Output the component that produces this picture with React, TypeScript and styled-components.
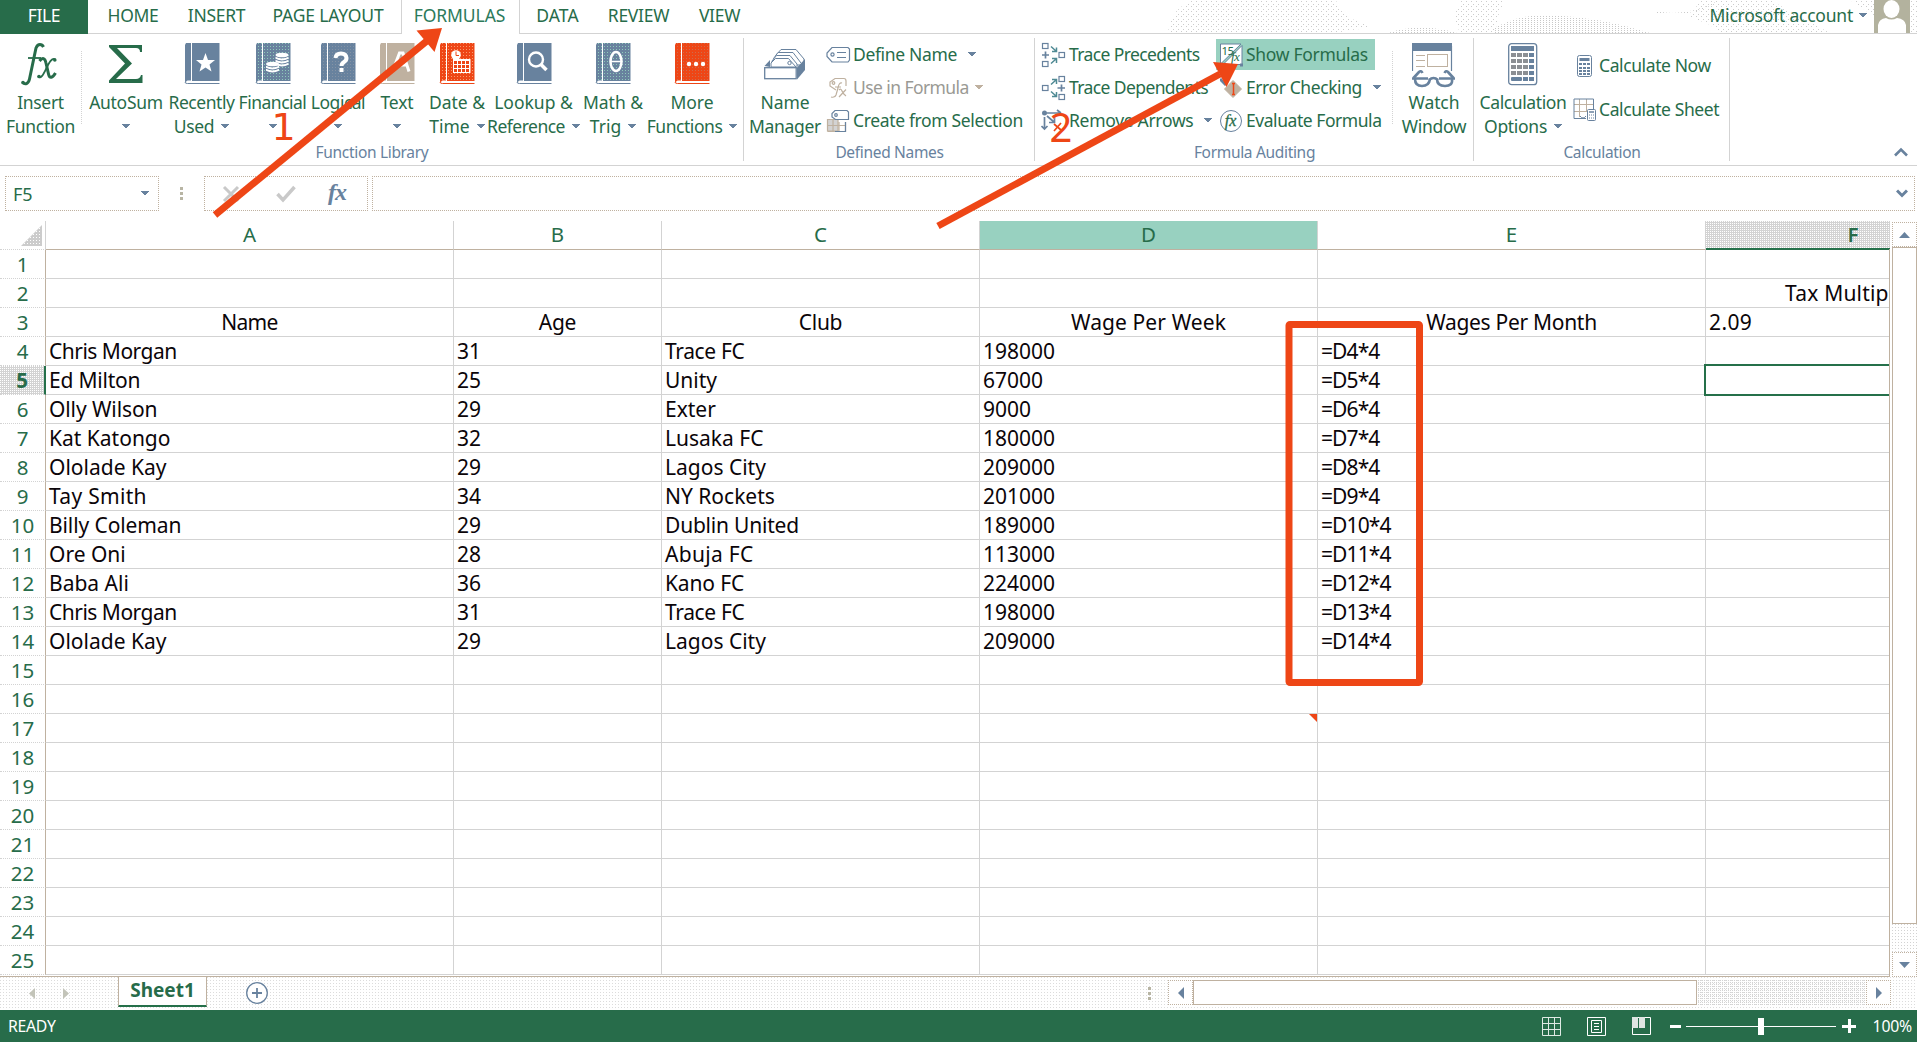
import React from 'react';
import styled, { createGlobalStyle, css } from 'styled-components';

const GREEN = '#276c4a';
const SLATE = '#68829e';
const TAN = '#bfb1a0';
const LINE = '#d3d3d3';
const RED = '#ee4616';
const MINT = '#98d1c0';

const Global = createGlobalStyle`
  * { box-sizing: border-box; }
  html, body { margin: 0; background: #fff; overflow: hidden; }
  body { font-family: "Noto Sans", "Open Sans", sans-serif; color: ${GREEN}; }
`;

const dots = (color: string, size = 3) => css`
  background-image: conic-gradient(at 1px 1px, transparent 75%, ${color} 0);
  background-size: ${size}px ${size}px;
`;

const Window = styled.div`
  position: relative;
  width: 1917px;
  height: 1042px;
  display: flex;
  flex-direction: column;
  overflow: hidden;
  white-space: nowrap;
  background: #fff;
`;

const Label = styled.span<{ $ls?: number }>`
  letter-spacing: ${(p) => p.$ls ?? 0}px;
`;

/* ---------- tabs ---------- */
const TabBar = styled.nav`
  position: relative;
  display: flex;
  flex: none;
  height: 34px;
  font-size: 17.5px;
  line-height: 31px;
`;
const Tab = styled.div<{ $w: number; $kind?: 'file' | 'active' }>`
  position: relative;
  width: ${(p) => p.$w}px;
  text-align: center;
  border-bottom: 1px solid ${LINE};
  ${(p) => p.$kind === 'file' && css`background: ${GREEN}; color: #fff; border-color: ${GREEN};`}
  ${(p) => p.$kind === 'active' && css`
    border: 1px solid ${LINE};
    border-width: 0 1px;
    color: #2c7a5b;
    padding-right: 2px;
  `}
`;
const TabFill = styled.div`
  flex: 1;
  display: flex;
  justify-content: flex-end;
  border-bottom: 1px solid ${LINE};
`;
const Clouds = styled.svg`
  position: absolute;
  left: 1150px;
  top: 0;
`;
const Account = styled.div`
  position: relative;
  display: flex;
  align-items: center;
  gap: 6px;
  height: 33px;
  padding: 0 7px 3px 0;
`;
const Avatar = styled.div`
  margin: 0 0 -3px 1px;
  width: 36px;
  height: 33px;
`;

/* ---------- ribbon ---------- */
const Ribbon = styled.section`
  display: flex;
  flex: none;
  height: 132px;
  border-bottom: 1px solid ${LINE};
  font-size: 17.5px;
`;
const Group = styled.div<{ $w: number }>`
  position: relative;
  display: flex;
  flex-direction: column;
  width: ${(p) => p.$w}px;
  &::after {
    content: '';
    position: absolute;
    right: 0;
    top: 4px;
    width: 1px;
    height: 123px;
    background: ${LINE};
  }
`;
const GroupBody = styled.div`
  display: flex;
  height: 106px;
`;
const GroupName = styled.div`
  text-align: center;
  font-size: 15.5px;
  letter-spacing: -0.32px;
  line-height: 26px;
  color: ${SLATE};
`;
const Big = styled.div<{ $w: number }>`
  width: ${(p) => p.$w}px;
  flex: none;
  display: flex;
  flex-direction: column;
  align-items: center;
`;
const BigIcon = styled.div`
  height: 56px;
  padding-top: 9px;
  svg { display: block; }
`;
const BigLine = styled.div`
  display: flex;
  justify-content: center;
  align-items: center;
  gap: 7px;
  height: 24px;
  line-height: 24px;
`;
const Dashed = styled.div`
  flex: none;
  width: 2px;
  height: 73px;
  margin-top: 17px;
  ${dots(LINE, 2)}
`;
const Column = styled.div<{ $w: number; $gap?: number; $top?: number; $pad?: number }>`
  width: ${(p) => p.$w}px;
  flex: none;
  display: flex;
  flex-direction: column;
  gap: ${(p) => p.$gap ?? 2}px;
  padding: ${(p) => p.$top ?? 5}px 0 0 ${(p) => p.$pad ?? 0}px;
`;
const Small = styled.div<{ $on?: boolean; $off?: boolean; $icon?: number; $inset?: number }>`
  display: grid;
  grid-template-columns: ${(p) => p.$icon ?? 27}px max-content max-content;
  align-items: center;
  height: 31px;
  line-height: 31px;
  svg { display: block; }
  > :first-child { margin-left: ${(p) => p.$inset ?? 0}px; }
  > :nth-child(3) { margin-left: 11px; }
  ${(p) => p.$off && css`color: #9a9a94; > :nth-child(3) { margin-left: 6px; }`}
  ${(p) => p.$on && css`background: ${MINT}; width: 159px;`}
`;
const Collapse = styled.div`
  flex: 1;
  display: flex;
  justify-content: flex-end;
  align-items: flex-end;
  padding: 0 9px 8px 0;
  svg { display: block; }
`;

/* ---------- formula bar ---------- */
const FormulaBar = styled.div`
  display: flex;
  flex: none;
  height: 55px;
  padding: 10px 0 0 5px;
`;
const Box = styled.div<{ $w: number; $ml?: number }>`
  width: ${(p) => p.$w}px;
  margin-left: ${(p) => p.$ml ?? 0}px;
  height: 35px;
  flex: none;
  display: flex;
  align-items: center;
  justify-content: space-between;
  border: 1px dotted ${TAN};
  font-size: 18px;
`;
const NameText = styled.span`
  padding-left: 7px;
`;
const CaretSlot = styled.span<{ $end?: number }>`
  display: flex;
  align-items: center;
  padding-right: ${(p) => p.$end ?? 6}px;
`;
const FxTools = styled.div`
  display: flex;
  align-items: center;
  gap: 36px;
  padding-left: 17px;
  svg { display: block; overflow: visible; }
  > :last-child { margin-left: -6px; }
`;
const Grip = styled.div`
  display: flex;
  flex-direction: column;
  gap: 2px;
  &::before, &::after, > i { content: ''; display: block; width: 3px; height: 3px; background: #b8b5a4; }
`;
const GripSlot = styled.div`
  width: 45px;
  height: 35px;
  padding-top: 11px;
  padding-left: 21px;
`;

/* ---------- sheet ---------- */
const SheetArea = styled.main`
  display: flex;
  flex: none;
  align-items: flex-start;
  height: 756px;
`;
const Sheet = styled.div`
  position: relative;
  width: 1890px;
  height: 756px;
  border-bottom: 1px solid ${TAN};
  overflow: hidden;
  &::after {
    content: '';
    position: absolute;
    right: 0;
    top: 28px;
    bottom: 0;
    width: 1px;
    background: ${TAN};
  }
`;
const columns = '46px 408px 208px 318px 338px 388px 184px';
const HeadRow = styled.div`
  display: grid;
  grid-template-columns: ${columns};
  height: 29px;
  font-size: 20.5px;
  line-height: 27px;
`;
const Head = styled.div<{ $sel?: 'mint' | 'grey' }>`
  text-align: center;
  border-right: 1px solid ${LINE};
  border-bottom: 1px solid ${TAN};
  ${(p) => p.$sel === 'mint' && css`background: ${MINT};`}
  ${(p) => p.$sel === 'grey' && css`
    background-color: ${LINE};
    ${dots('#fff', 2)}
    border-right: 0;
    border-bottom: 2px solid #25704a;
    padding-left: 110px;
    font-weight: 600;
  `}
`;
const Corner = styled.div`
  display: flex;
  justify-content: flex-end;
  align-items: flex-end;
  padding: 0 3px 3px 0;
  border-right: 1px solid ${LINE};
  border-bottom: 1px dotted ${LINE};
  svg { display: block; }
`;
const Row = styled.div`
  display: grid;
  grid-template-columns: ${columns};
  height: 29px;
`;
const RowHead = styled.div<{ $sel?: boolean }>`
  text-align: center;
  font-size: 20.5px;
  line-height: 28px;
  border-right: 1px solid ${TAN};
  border-bottom: 1px dotted ${LINE};
  ${(p) => p.$sel && css`
    background-color: ${LINE};
    ${dots('#fff', 2)}
    border-right: 2px solid #25704a;
    font-weight: 700;
  `}
`;
const Cell = styled.div<{ $center?: boolean; $indent?: number }>`
  position: relative;
  padding-left: ${(p) => (p.$center ? 0 : p.$indent ?? 3)}px;
  text-align: ${(p) => (p.$center ? 'center' : 'left')};
  border-right: 1px solid ${LINE};
  border-bottom: 1px solid ${LINE};
  color: #0b0509;
  font-size: 21px;
  line-height: 28px;
  overflow: hidden;
`;
const Note = styled.i`
  position: absolute;
  right: 0;
  top: 0;
  border-left: 8px solid transparent;
  border-top: 8px solid ${RED};
`;
const ActiveCell = styled.div`
  position: absolute;
  left: 1704px;
  top: 143px;
  width: 190px;
  height: 32px;
  border: 2px solid #25704a;
`;
const VScroll = styled.div`
  width: 25px;
  margin: 1px 0 0 2px;
  height: 755px;
  flex: none;
  display: flex;
  flex-direction: column;
  ${dots(LINE, 3)}
`;
const ScrollButton = styled.div`
  width: 25px;
  height: 25px;
  flex: none;
  display: flex;
  align-items: center;
  justify-content: center;
  background: #fff;
  border: 1px dotted ${TAN};
`;
const VThumb = styled.div`
  height: 677px;
  margin-bottom: 28px;
  background: #fff;
  border: 1px solid ${TAN};
`;

/* ---------- bottom ---------- */
const SheetBar = styled.div`
  display: flex;
  flex: none;
  height: 33px;
  ${dots('#dcdcdc', 3)}
`;
const SheetNav = styled.div`
  width: 118px;
  display: flex;
  align-items: center;
  gap: 28px;
  padding-left: 29px;
`;
const SheetTab = styled.div`
  width: 89px;
  height: 30px;
  background: #fff;
  border: 1px solid ${TAN};
  border-top: 0;
  border-bottom: 2px solid #25704a;
  text-align: center;
  font-size: 19px;
  line-height: 27px;
  font-weight: 700;
`;
const AddSheet = styled.div`
  width: 945px;
  padding: 5px 0 0 39px;
  display: flex;
  justify-content: space-between;
  svg { display: block; }
`;
const AddGrip = styled.div`
  padding-top: 5px;
  padding-right: 1px;
`;
const HScroll = styled.div`
  display: flex;
  width: 723px;
  height: 25px;
  margin: 3px 0 0 16px;
  ${dots(LINE, 2)}
`;
const HThumb = styled.div`
  width: 504px;
  margin-right: 169px;
  background: #fff;
  border: 1px solid ${TAN};
`;
const Status = styled.footer`
  flex: none;
  height: 32px;
  display: flex;
  align-items: center;
  background: ${GREEN};
  color: #fff;
  font-size: 15.8px;
  padding: 0 5px 0 8px;
  svg { display: block; }
`;
const StatusText = styled.span`
  flex: 1;
`;
const ViewIcons = styled.div`
  display: flex;
  gap: 26px;
  margin-right: 19px;
`;
const Zoom = styled.div`
  margin-right: 17px;
`;

const Overlay = styled.svg`
  position: absolute;
  left: 0;
  top: 0;
  pointer-events: none;
`;

/* ---------- icons ---------- */
const Caret = ({ c = SLATE }: { c?: string }) => (
  <svg width="8" height="5" viewBox="0 0 8 5" shapeRendering="crispEdges"><path d="M0 0h8L4 4.6z" fill={c} /></svg>
);

const Book = ({ c, speck, children }: { c: string; speck?: string; children: React.ReactNode }) => {
  const id = 'b' + c.slice(1) + (speck ?? '').slice(1);
  return (
    <svg width="36" height="42" viewBox="0 0 36 42">
      <defs>
        <pattern id={id} width="3" height="3" patternUnits="userSpaceOnUse">
          <rect width="3" height="3" fill={c} />
          {speck && <rect width="1" height="1" fill={speck} />}
        </pattern>
      </defs>
      <path d="M2 0H7V37.5H3.5L1 39.5V2z" fill={`url(#${id})`} />
      <path d="M8 0H35.500V38H8z" fill={`url(#${id})`} />
      <path d="M1 39Q1 40.500 3.500 40.500H35.500" fill="none" stroke={c} strokeWidth="1" />
      {children}
    </svg>
  );
};

const coin = (x: number, y: number, n: number) => (
  <g fill="#fff">
    <ellipse cx={x} cy={y} rx="6.500" ry="2.300" />
    {Array.from({ length: n }, (_, i) => (
      <path key={i} d={`M${x - 6.5} ${y + 1.8 + i * 3}q6.500 3.600 13 0v2q-6.500 3.400 -13 0z`} />
    ))}
  </g>
);

const SmallFx = () => (
  <svg width="24" height="26" viewBox="0 0 24 26">
    <text x="2" y="19" fontFamily="Liberation Serif, serif" fontStyle="italic" fontWeight="600" fontSize="24" fill={SLATE} letterSpacing="-1">fx</text>
  </svg>
);
const BigFx = () => (
  <svg width="40" height="43" viewBox="0 0 40 43" fill="none" stroke={GREEN}>
    <path d="M22.500 4C21 1 17 0 15 5L8.500 36C7.500 41 4 42 1.500 39.500" strokeWidth="3" />
    <path d="M7 15H20" strokeWidth="1.800" />
    <path d="M18.500 18C21.500 14 24 15 25 20L27.500 31C28.500 36 31.500 35 34.500 30" strokeWidth="3" />
    <path d="M34.500 16.500C31 14 28 20 25.500 25S20 37 17 33.500" strokeWidth="1.800" />
    <circle cx="33.800" cy="17" r="1.800" fill={GREEN} stroke="none" />
    <circle cx="18" cy="33.500" r="1.800" fill={GREEN} stroke="none" />
    <circle cx="2" cy="39.500" r="1.800" fill={GREEN} stroke="none" />
  </svg>
);
const Sigma = () => (
  <svg width="34" height="42" viewBox="0 0 34 42"><path d="M0 2H33V9H31Q31 5 27 5H8L23 20.500L7 36H27Q31 36 32 32H33.500V40H0V37.500L16 20.500L0 4z" fill={GREEN} /></svg>
);
const NameManager = () => (
  <svg width="42" height="40" viewBox="0 0 42 40">
    <g fill="#fff" stroke={SLATE} strokeWidth="1">
      <path d="M12 17V12L17 6.500H32L40 16V22H30z" />
      <path d="M9.500 22V15.500L14 9.500H29L37 20" />
      <path d="M8 22V18L12.500 12.500H26L33 21V25H8z" />
      <path d="M7 24V20L11.500 15.500H24.500L32 24z" />
    </g>
    <path d="M.5 23L6 17V24z" fill={SLATE} />
    <path d="M33 24.500L41 16V27L33 36.500z" fill={SLATE} />
    <rect x=".7" y="24.700" width="31.500" height="11" fill="#fff" stroke={SLATE} strokeWidth="1.300" />
    <circle cx="25.500" cy="20" r="1.700" fill="#fff" stroke={SLATE} />
  </svg>
);
const Tag = () => (
  <svg width="25" height="18" viewBox="0 0 25 18" fill="none" stroke={SLATE} strokeWidth="1.200">
    <path d="M6 1.500H22L23.500 3V14L22 16H6L1 10.500V7z" /><circle cx="6.500" cy="8.500" r="1.600" /><path d="M11 6.500H20M11 11.500H20" />
  </svg>
);
const UseIn = () => (
  <svg width="25" height="22" viewBox="0 0 25 22" fill="none" stroke={TAN} strokeWidth="1.200">
    <path d="M10 13L4 9V5L9 1.500H18Q20 1.500 20 4V9" /><circle cx="7.500" cy="6" r="1.300" />
    <path d="M16 6Q13 5 12 11L10 18Q9 21 5 20M9 10H15M13 13Q15 11 16 14T20 19M20 12.500L13 20" />
  </svg>
);
const CreateSel = () => (
  <svg width="24" height="24" viewBox="0 0 24 24" strokeWidth="1.200">
    <path d="M1.500 10.500H12V22H1.500z" fill={LINE} stroke={TAN} />
    <path d="M1.500 16.500H19M7 10V22M13 13V22M1.500 22.500H19.500V13" fill="none" stroke={TAN} />
    <path d="M9 22.500H19.500V13" fill="none" stroke={SLATE} />
    <path d="M9 1.500H21L22.500 3V10.500H9.500L6 8V4.500z" fill="#fff" stroke={SLATE} /><circle cx="10" cy="6" r="1.300" fill="none" stroke={SLATE} />
  </svg>
);
const Precedents = () => (
  <svg width="25" height="26" viewBox="0 0 25 26" fill="none" stroke={SLATE} strokeWidth="1.200">
    <rect x="1.500" y="1.500" width="5.500" height="5" /><rect x="1.500" y="19.500" width="5.500" height="5" /><rect x="18" y="10.500" width="5.500" height="5" />
    <path d="M1 13H8M4.500 9.500V16.500" strokeWidth="1.700" /><path d="M10 4.500L15 9M15.500 5.500V9.500H11M10 21.500L15 17M11 16.500H15.500V21" stroke="#4f8a94" strokeWidth="1.500" />
  </svg>
);
const Dependents = () => (
  <svg width="25" height="26" viewBox="0 0 25 26" fill="none" stroke={SLATE} strokeWidth="1.200">
    <rect x="18" y="1.500" width="5.500" height="5" /><rect x="18" y="19.500" width="5.500" height="5" /><rect x="1.500" y="10.500" width="5.500" height="5" />
    <path d="M16.500 13H24M20.500 9.500V16.500" strokeWidth="1.700" /><path d="M10 9.500L15 5M11 4.500H15.500V9M10 16.500L15 21M15.500 17V21.500H11" stroke="#4f8a94" strokeWidth="1.500" />
  </svg>
);
const RemoveArrows = () => (
  <svg width="25" height="24" viewBox="0 0 25 24" fill="none" stroke={SLATE} strokeWidth="1.700">
    <circle cx="3.500" cy="4" r="2.500" fill={SLATE} stroke="none" /><path d="M6 4H19M16 1L20 4M3.500 8V20M.5 17L3.500 20L6.500 17M6 7L13 13M13.500 8V13.500H8" />
    <path d="M13 15L20 21M20 14L13 22" stroke={RED} />
  </svg>
);
const ShowIcon = () => (
  <svg width="23" height="24" viewBox="0 0 23 24">
    <path d="M.5 1H21L.5 21z" fill="#fff" stroke={SLATE} /><path d="M22 2.500V21.500H3z" fill="#fff" stroke={SLATE} />
    <text x="1.500" y="12" fontSize="11.500" fill={GREEN} fontFamily="Noto Sans, sans-serif" letterSpacing="-.5">15</text>
    <text x="11" y="18" fontSize="13" fill={GREEN} fontFamily="Liberation Serif, serif" fontStyle="italic" letterSpacing="-.5">fx</text>
    <rect x="20" y="20.500" width="3" height="3" fill={SLATE} />
  </svg>
);
const ErrorIcon = () => (
  <svg width="23" height="24" viewBox="0 0 23 24">
    <path d="M0 3L6 9" stroke={SLATE} strokeWidth="3" /><path d="M13 4.500L21.500 13L13 21.500L4.500 13z" fill={TAN} stroke={TAN} strokeLinejoin="round" /><path d="M13.500 7V19M12 7.500H15M12 18.500H15" stroke={RED} strokeWidth="1.500" />
  </svg>
);
const Evaluate = () => (
  <svg width="23" height="24" viewBox="0 0 23 24">
    <circle cx="11" cy="12" r="10.500" fill="#fff" stroke={SLATE} /><text x="10.500" y="16.500" textAnchor="middle" fontSize="16" fontStyle="italic" fill={GREEN} stroke={GREEN} strokeWidth=".3" fontFamily="Liberation Serif, serif">fx</text>
  </svg>
);
const Watch = () => (
  <svg width="44" height="46" viewBox="0 0 44 46" fill="none">
    <path d="M.5 28V3M39.500 28V3" stroke={SLATE} strokeWidth="1.200" /><rect width="40" height="8" fill={SLATE} />
    <path d="M4 12.500H13M4 17.500H13M4 23.500H13" stroke={TAN} /><rect x="15.500" y="11.500" width="20" height="12" stroke={TAN} />
    <g stroke={SLATE} strokeWidth="2.600"><path d="M1.500 35L7 29Q9 27 10.500 30M41.500 35L36 29Q34 27 32.500 30" /><path d="M0 35.500H16M27 35.500H43M17 37Q21.500 33 26 37" /><path d="M3 36Q3 43 10 43T18 36M25 36Q25 43 33 43T40 36" /></g>
  </svg>
);
const CalcBig = () => (
  <svg width="30" height="43" viewBox="0 0 30 43">
    <rect x=".7" y=".7" width="28" height="41" rx="3" fill="#fff" stroke={SLATE} strokeWidth="1.300" /><rect x="3" y="3" width="23" height="5" fill={SLATE} />
    {[10, 16, 22, 28].map((y) => [3, 9, 15, 21].map((x) => <rect key={`${x}-${y}`} x={x} y={y} width="5" height="4" fill={x === 21 ? SLATE : '#8c8f93'} />))}
    <rect x="3" y="34" width="11" height="4" rx="1" fill={SLATE} /><rect x="15" y="34" width="5" height="4" fill={SLATE} /><rect x="21" y="34" width="5" height="4" fill={SLATE} />
  </svg>
);
const CalcSmall = () => (
  <svg width="20" height="24" viewBox="0 0 20 24">
    <rect x="4.500" y="1.500" width="14" height="21" rx="2" fill="#fff" stroke={SLATE} /><rect x="6.500" y="4" width="10" height="3" fill={SLATE} />
    {[9, 13, 16, 19].map((y) => [6, 10, 14].map((x) => <rect key={`${x}-${y}`} x={x} y={y} width="3" height="2" fill={SLATE} />))}
  </svg>
);
const CalcSheet = () => (
  <svg width="24" height="24" viewBox="0 0 24 24" fill="none">
    <path d="M6.500 1V19M13.500 1V14M1 6.500H21M1 13.500H14" stroke={TAN} /><path d="M13 20.500H1V1H20.500V11M7 18Q10 22 13 18" stroke={SLATE} />
    <rect x="14.500" y="11.500" width="8" height="11" rx="1" fill="#fff" stroke={SLATE} /><path d="M16 14H21" stroke={SLATE} strokeWidth="1.500" /><path d="M16 17H21M16 20H21" stroke={SLATE} strokeDasharray="1 1" />
  </svg>
);

const books = {
  recent: <Book c={SLATE}><path d="M21.500 10L24 17H31L25.500 21.500L27.500 28.500L21.500 24.500L15.500 28.500L17.500 21.500L12 17H19z" fill="#fff" /></Book>,
  financial: <Book c={SLATE} speck="#8fc9ba">{coin(27, 12, 3)}{coin(17.5, 21, 2)}</Book>,
  logical: <Book c={SLATE} speck="#8493a5"><path d="M15.500 15Q16 10.500 21 10.500T26.500 15Q26.500 17.500 24 19Q21.500 20.500 21.500 23" fill="none" stroke="#fff" strokeWidth="4" /><rect x="19.500" y="25" width="4" height="4" fill="#fff" /></Book>,
  text: <Book c={TAN}><path d="M13.500 28.500L20.500 10H24L30 28.500M16 22H27" fill="none" stroke="#fff" strokeWidth="3" /></Book>,
  date: (
    <Book c={RED} speck="#f79a6e">
      <circle cx="17" cy="12" r="4.800" fill="#fff" /><path d="M17 8.500V12.500H20" stroke={RED} fill="none" />
      <path d="M14 16H31.500V30H14z" fill="#fff" />
      {[18, 22, 26].map((y) => [15, 19, 23, 27].map((x) => <rect key={`${x}-${y}`} x={x} y={y} width="3" height="3" fill={RED} />))}
    </Book>
  ),
  lookup: <Book c={SLATE}><circle cx="20" cy="16.500" r="7" fill="none" stroke="#fff" strokeWidth="2.400" /><path d="M25 21.500L30.500 27" stroke="#fff" strokeWidth="3.500" /></Book>,
  math: <Book c={SLATE} speck="#8fc9ba"><ellipse cx="21" cy="18.500" rx="5.500" ry="9.500" fill="none" stroke="#fff" strokeWidth="2.500" /><path d="M16 18.500H26" stroke="#fff" strokeWidth="1.500" /></Book>,
  more: <Book c={RED} speck="#cf6c4c"><g fill="#fff"><circle cx="15" cy="21" r="2.200" /><circle cx="22" cy="21" r="2.200" /><circle cx="29" cy="21" r="2.200" /></g></Book>,
};

type BigProps = { w: number; icon: React.ReactNode; a: string; b?: string; caret?: boolean; lsA?: number; lsB?: number };
const BigButton = ({ w, icon, a, b, caret, lsA = -0.3, lsB = -0.3 }: BigProps) => (
  <Big $w={w}>
    <BigIcon>{icon}</BigIcon>
    <BigLine><Label $ls={lsA}>{a}</Label></BigLine>
    <BigLine>{b && <Label $ls={lsB}>{b}</Label>}{caret && <Caret />}</BigLine>
  </Big>
);

/* ---------- data ---------- */
const players: [string, string, string, string][] = [
  ['Chris Morgan', '31', 'Trace FC', '198000'],
  ['Ed Milton', '25', 'Unity', '67000'],
  ['Olly Wilson', '29', 'Exter', '9000'],
  ['Kat Katongo', '32', 'Lusaka FC', '180000'],
  ['Ololade Kay', '29', 'Lagos City', '209000'],
  ['Tay Smith', '34', 'NY Rockets', '201000'],
  ['Billy Coleman', '29', 'Dublin United', '189000'],
  ['Ore Oni', '28', 'Abuja FC', '113000'],
  ['Baba Ali', '36', 'Kano FC', '224000'],
  ['Chris Morgan', '31', 'Trace FC', '198000'],
  ['Ololade Kay', '29', 'Lagos City', '209000'],
];

const tracking: Record<string, number> = {
  'Chris Morgan': -0.5,
  'Ed Milton': -0.2,
  'Olly Wilson': -0.1,
  'Tay Smith': 0.3,
  'Billy Coleman': -0.1,
  'Trace FC': -0.35,
  'Dublin United': -0.2,
  'Abuja FC': 0.3,
  'Kano FC': -0.15,
  Name: -0.7,
  Age: -0.3,
  Club: -0.3,
  'Wage Per Week': 0.1,
  'Wages Per Month': -0.3,
  'Tax Multip': 0.2,
  '2.09': 0.4,
};
const trackingOf = (v: string) => (v.startsWith('=') ? -0.9 : tracking[v] ?? 0);

const SheetRow = ({ n }: { n: number }) => {
  const p = players[n - 4];
  const head = n === 3 ? ['Name', 'Age', 'Club', 'Wage Per Week', 'Wages Per Month'] : null;
  const values = head ?? (p ? [...p, `=D${n}*4`] : ['', '', '', '', '']);
  const last = n === 2 ? 'Tax Multip' : n === 3 ? '2.09' : '';
  return (
    <Row>
      <RowHead $sel={n === 5}>{n}</RowHead>
      {values.map((v, i) => (
        <Cell key={i} $center={!!head}>
          <Label $ls={trackingOf(v)}>{v}</Label>
          {n === 17 && i === 3 && <Note />}
        </Cell>
      ))}
      <Cell $indent={n === 2 ? 79 : 3}><Label $ls={trackingOf(last)}>{last}</Label></Cell>
    </Row>
  );
};

export default function App() {
  return (
    <Window>
      <Global />
      <TabBar>
        <Clouds width="767" height="33">
          <defs>
            <pattern id="light" width="5" height="5" patternUnits="userSpaceOnUse"><rect x="1" y="1" width="1" height="1" fill="#ccc" /><rect x="3" y="4" width="1" height="1" fill="#ccc" /></pattern>
            <pattern id="dense" width="3" height="2" patternUnits="userSpaceOnUse"><rect width="1" height="1" fill="#c8c8c8" /></pattern>
          </defs>
          <path d="M18 33Q20 8 44 0H186Q190 18 217 24V28L180 33z" fill="url(#light)" />
          <path d="M55 33Q56 18 72 14L120 20L142 12L148 0H180Q186 20 200 24L190 33z" fill="url(#light)" />
          <path d="M238 33Q270 22 307 33z" fill="url(#dense)" />
          <path d="M312 0H355Q347 15 346 28L342 33H310L304 16z" fill="url(#light)" />
          <path d="M312 0H345Q330 12 336 33H310L304 16z" fill="url(#light)" />
          <path d="M344 28Q370 14 400 15Q450 17 500 33H344z" fill="url(#dense)" />
          <path d="M507 11Q535 18 570 0Q545 18 507 13z" fill="url(#dense)" />
          <path d="M550 0H620L680 33H570Q560 22 540 18z" fill="url(#light)" />
          <path d="M700 0H767V33H745L715 10z" fill="url(#light)" />
        </Clouds>
        <Tab $w={88} $kind="file"><Label $ls={-0.4}>FILE</Label></Tab>
        <Tab $w={90}><Label $ls={-0.3}>HOME</Label></Tab>
        <Tab $w={77}><Label $ls={-0.3}>INSERT</Label></Tab>
        <Tab $w={146}><Label $ls={-0.15}>PAGE LAYOUT</Label></Tab>
        <Tab $w={119} $kind="active"><Label $ls={-0.1}>FORMULAS</Label></Tab>
        <Tab $w={75}><Label $ls={0.1}>DATA</Label></Tab>
        <Tab $w={87}><Label $ls={-0.3}>REVIEW</Label></Tab>
        <Tab $w={75}><Label $ls={-0.3}>VIEW</Label></Tab>
        <TabFill>
          <Account>
            <Label $ls={-0.22}>Microsoft account</Label>
            <Caret />
            <Avatar>
              <svg width="36" height="33" viewBox="0 0 36 33">
                <rect width="36" height="33" fill="#b3b29e" />
                <ellipse cx="17.500" cy="9" rx="8" ry="9" fill="#fff" />
                <path d="M4 33V25Q5 19 12 18Q17.500 21 23 18Q31 19 32 25V33z" fill="#fff" />
              </svg>
            </Avatar>
          </Account>
        </TabFill>
      </TabBar>

      <Ribbon>
        <Group $w={744}>
          <GroupBody>
            <BigButton w={81} icon={<BigFx />} a="Insert" b="Function" />
            <Dashed />
            <BigButton w={86} icon={<Sigma />} a="AutoSum" caret />
            <BigButton w={65} icon={books.recent} a="Recently" b="Used" caret lsA={-0.45} lsB={-0.3} />
            <BigButton w={77} icon={books.financial} a="Financial" caret lsA={-0.5} />
            <BigButton w={54} icon={books.logical} a="Logical" caret lsA={-0.5} />
            <BigButton w={64} icon={books.text} a="Text" caret lsA={-0.1} />
            <BigButton w={56} icon={books.date} a="Date &amp;" b="Time" caret lsA={0} lsB={0} />
            <BigButton w={97} icon={books.lookup} a="Lookup &amp;" b="Reference" caret lsA={0} lsB={-0.5} />
            <BigButton w={62} icon={books.math} a="Math &amp;" b="Trig" caret lsA={0} lsB={0} />
            <BigButton w={96} icon={books.more} a="More" b="Functions" caret lsA={-0.1} lsB={-0.45} />
          </GroupBody>
          <GroupName>Function Library</GroupName>
        </Group>

        <Group $w={291}>
          <GroupBody>
            <BigButton w={82} icon={<NameManager />} a="Name" b="Manager" lsA={-0.1} />
            <Column $w={208}>
              <Small><Tag /><Label $ls={-0.35}>Define Name</Label><Caret /></Small>
              <Small $off><UseIn /><Label $ls={-0.58}>Use in Formula</Label><Caret c={TAN} /></Small>
              <Small><CreateSel /><Label $ls={-0.35}>Create from Selection</Label></Small>
            </Column>
          </GroupBody>
          <GroupName>Defined Names</GroupName>
        </Group>

        <Group $w={439}>
          <GroupBody>
            <Column $w={181} $pad={6}>
              <Small $icon={28}><Precedents /><Label $ls={-0.6}>Trace Precedents</Label></Small>
              <Small $icon={28}><Dependents /><Label $ls={-0.6}>Trace Dependents</Label></Small>
              <Small $icon={28}><RemoveArrows /><Label $ls={-0.3}>Remove Arrows</Label><Caret /></Small>
            </Column>
            <Column $w={176}>
              <Small $on $icon={30} $inset={4}><ShowIcon /><Label $ls={-0.3}>Show Formulas</Label></Small>
              <Small $icon={30} $inset={4}><ErrorIcon /><Label $ls={-0.42}>Error Checking</Label><Caret /></Small>
              <Small $icon={30} $inset={4}><Evaluate /><Label $ls={-0.45}>Evaluate Formula</Label></Small>
            </Column>
            <Dashed />
            <BigButton w={80} icon={<Watch />} a="Watch" b="Window" lsA={-0.1} />
          </GroupBody>
          <GroupName>Formula Auditing</GroupName>
        </Group>

        <Group $w={256}>
          <GroupBody>
            <BigButton w={98} icon={<CalcBig />} a="Calculation" b="Options" caret lsA={-0.4} />
            <Column $w={157} $top={16} $gap={13}>
              <Small $inset={1}><CalcSmall /><Label $ls={-0.4}>Calculate Now</Label></Small>
              <Small $inset={1}><CalcSheet /><Label $ls={-0.4}>Calculate Sheet</Label></Small>
            </Column>
          </GroupBody>
          <GroupName>Calculation</GroupName>
        </Group>
        <Collapse><svg width="14" height="10" viewBox="0 0 14 10"><path d="M1 8.500L7 2.500L13 8.500" fill="none" stroke={SLATE} strokeWidth="2.600" /></svg></Collapse>
      </Ribbon>

      <FormulaBar>
        <Box $w={154}><NameText>F5</NameText><CaretSlot $end={9}><Caret /></CaretSlot></Box>
        <GripSlot><Grip><i /></Grip></GripSlot>
        <Box $w={164}>
          <FxTools>
            <svg width="18" height="18" viewBox="0 0 18 18"><path d="M2 2L16 16M16 2L2 16" stroke="#c9c9c9" strokeWidth="3" /></svg>
            <svg width="20" height="18" viewBox="0 0 20 18"><path d="M1.500 9L7 15L18.500 2" fill="none" stroke="#c9c9c9" strokeWidth="3.500" /></svg>
            <SmallFx />
          </FxTools>
        </Box>
        <Box $w={1543} $ml={4}>
          <i />
          <CaretSlot><svg width="12" height="9" viewBox="0 0 12 9"><path d="M1 1.500L6 6.500L11 1.500" fill="none" stroke={SLATE} strokeWidth="3" /></svg></CaretSlot>
        </Box>
      </FormulaBar>

      <SheetArea>
        <Sheet>
          <HeadRow>
            <Corner><svg width="21" height="21"><defs><pattern id="cn" width="3" height="3" patternUnits="userSpaceOnUse"><rect width="3" height="3" fill="#ccc" /><rect width="1" height="1" fill="#fff" /></pattern></defs><path d="M21 0V21H0z" fill="url(#cn)" /></svg></Corner>
            <Head>A</Head><Head>B</Head><Head>C</Head><Head $sel="mint">D</Head><Head>E</Head><Head $sel="grey">F</Head>
          </HeadRow>
          {Array.from({ length: 25 }, (_, i) => <SheetRow key={i} n={i + 1} />)}
          <ActiveCell />
        </Sheet>
        <VScroll>
          <ScrollButton><svg width="11" height="6"><path d="M5.500 0L11 6H0z" fill={SLATE} /></svg></ScrollButton>
          <VThumb />
          <ScrollButton><svg width="11" height="6"><path d="M5.500 6L11 0H0z" fill={SLATE} /></svg></ScrollButton>
        </VScroll>
      </SheetArea>

      <SheetBar>
        <SheetNav>
          <svg width="6" height="11"><path d="M6 0V11L0 5.500z" fill="#c3c4b9" /></svg>
          <svg width="6" height="11"><path d="M0 0V11L6 5.500z" fill="#c3c4b9" /></svg>
        </SheetNav>
        <SheetTab>Sheet1</SheetTab>
        <AddSheet>
          <svg width="22" height="22" viewBox="0 0 22 22"><circle cx="11" cy="11" r="10.300" fill="#fff" stroke={SLATE} strokeWidth="1.300" /><path d="M6 11H16M11 6V16" stroke={SLATE} strokeWidth="1.800" /></svg>
          <AddGrip><Grip><i /></Grip></AddGrip>
        </AddSheet>
        <HScroll>
          <ScrollButton><svg width="6" height="12"><path d="M6 0V12L0 6z" fill={SLATE} /></svg></ScrollButton>
          <HThumb />
          <ScrollButton><svg width="6" height="12"><path d="M0 0V12L6 6z" fill={SLATE} /></svg></ScrollButton>
        </HScroll>
      </SheetBar>

      <Status>
        <StatusText><Label $ls={-0.3}>READY</Label></StatusText>
        <ViewIcons>
          <svg width="19" height="19" fill="none" stroke="#dfeae4"><path d="M.5 .5H18.500V18.500H.5zM6.500 0V19M12.500 0V19M0 6.500H19M0 12.500H19" /></svg>
          <svg width="19" height="19" fill="none" stroke="#fff"><path d="M.5 .5H18.500V18.500H.5zM4.500 3.500H14.500V15.500H4.500zM7 6.500H12M7 9.500H12M7 12.500H12" /></svg>
          <svg width="19" height="19" fill="none" stroke="#fff"><path d="M.5 .5H18.500V17.500H.5z" /><path d="M0 0H6V11H0zM7 0H13V11H7z" fill="#dfe5e2" stroke="none" /></svg>
        </ViewIcons>
        <Zoom>
          <svg width="186" height="18" shapeRendering="crispEdges">
            <path d="M0 9H11M172 9H186M179 2V16" stroke="#fff" strokeWidth="3" /><path d="M16 9.500H166" stroke="#fff" /><rect x="88" y="1" width="6" height="17" fill="#fff" />
          </svg>
        </Zoom>
        <Label $ls={-0.2}>100%</Label>
      </Status>

      <Overlay width="1917" height="1042">
        <rect x="1289" y="324.500" width="130.500" height="358" rx="1" fill="none" stroke={RED} strokeWidth="7" />
        <path d="M215 215L428 40" stroke={RED} strokeWidth="7" />
        <path d="M442 28L434.500 52L416.500 30.500z" fill={RED} />
        <path d="M938 226L1220 74" stroke={RED} strokeWidth="7" />
        <path d="M1238 64L1226.500 87L1213 62z" fill={RED} />
        <text x="1049.500" y="141.500" fontSize="40" fontFamily="Noto Sans, sans-serif" fill={RED}>2</text>
        <text x="271.500" y="140" fontSize="38" fontFamily="DejaVu Sans, sans-serif" fill={RED}>1</text>
      </Overlay>
    </Window>
  );
}
